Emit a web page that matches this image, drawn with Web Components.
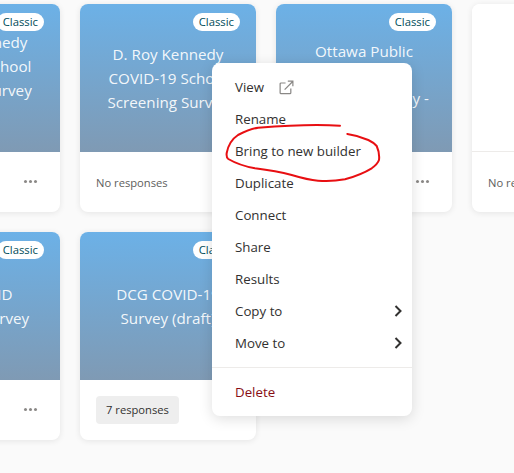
<!DOCTYPE html>
<html><head><meta charset="utf-8">
<style>
html,body{margin:0;height:473px;overflow:hidden;background:#fafafa;font-family:"Open Sans","Noto Sans",sans-serif;}
</style></head><body>
<survey-page>
  <survey-card title-text="D. Roy Kennedy|COVID-19 School|COVID-19 Survey" shift="24" classic dots></survey-card>
  <survey-card title-text="D. Roy Kennedy|COVID-19 School|Screening Survey" classic status="No responses"></survey-card>
  <survey-card title-text="Ottawa Public|Health|Screening Survey -" shift="7" classic dots></survey-card>
  <survey-card blank status="No responses"></survey-card>
  <survey-card title-text="DCG COVID|Screener Survey" classic dots></survey-card>
  <survey-card title-text="DCG COVID-19|Survey (draft)" classic badge="7 responses"></survey-card>
  <survey-menu slot="menu">
    <menu-entry>View<svg slot="after" width="15" height="15" viewBox="0 0 16 16" fill="none" stroke="#8a8886" stroke-width="1.3"><path d="M7 3.2H2.2a1 1 0 0 0-1 1v9.4a1 1 0 0 0 1 1h9.4a1 1 0 0 0 1-1V9"/><path d="M6 10.2 14.6 1.6M9.4 1.2h5.4v5.4"/></svg></menu-entry>
    <menu-entry>Rename</menu-entry>
    <menu-entry>Bring to new builder</menu-entry>
    <menu-entry>Duplicate</menu-entry>
    <menu-entry>Connect</menu-entry>
    <menu-entry>Share</menu-entry>
    <menu-entry>Results</menu-entry>
    <menu-entry sub>Copy to</menu-entry>
    <menu-entry sub>Move to</menu-entry>
    <menu-rule></menu-rule>
    <menu-entry danger>Delete</menu-entry>
  </survey-menu>
  <svg slot="menu" style="position:absolute;left:0;top:0;pointer-events:none" width="514" height="473" fill="none"><path d="M340 125.7C312 123.5 285 125.5 258 127.7C250 129 245 131.5 238 135C232 139 228 146 226.7 153C226.3 156 226.8 158 228.3 159C236 163.5 245 166.5 255 168.3C268 170 280 172 291.7 175C300 177.5 309 180 318 180.7C327 181.5 336 181 345 179.3C355 176.5 364 173 371.7 168.3C375.5 165.5 378 163 379 160C379.6 155 378.5 150 376.7 146C374.5 143.5 371.5 141.5 368.3 140C361.5 137 354.5 135 347.3 134" stroke="#e80f12" stroke-width="2" stroke-linecap="round"/></svg>
</survey-page>
<script>
customElements.define('survey-page',class extends HTMLElement{
  constructor(){super();this.attachShadow({mode:'open'}).innerHTML=`<style>
  :host{display:block;position:relative;width:514px;height:473px;overflow:hidden}
  .grid{display:grid;grid-template-columns:repeat(4,176px);grid-auto-rows:208px;gap:20px;margin-left:-116px;padding-top:4px;width:max-content}
  </style><div class="grid"><slot></slot></div><slot name="menu"></slot>`;}
});
customElements.define('survey-card',class extends HTMLElement{
  connectedCallback(){
    const a=n=>this.getAttribute(n);
    const lines=(a('title-text')||'').split('|').map(l=>`<div>${l}</div>`).join('');
    const blank=this.hasAttribute('blank');
    const st=a('status')||'';
    this.attachShadow({mode:'open'}).innerHTML=`<style>
    :host{display:flex;flex-direction:column;background:#fff;border-radius:8px;overflow:hidden;box-shadow:0 1px 6px rgba(0,0,0,.09)}
    .top{height:148px;flex:none;box-sizing:border-box;position:relative;display:flex;align-items:center;justify-content:center;background:linear-gradient(#6cb1e7,#7f9ab4);color:rgba(255,255,255,.93);font-size:15.2px;line-height:23.7px;text-align:center;padding:2px 0 ${a('shift')||0}px}
    .top.blank{background:#fff;border-bottom:1px solid #edebe9}
    .pill{position:absolute;top:9px;right:16px;height:18px;line-height:18px;padding:0 6px;border-radius:9px;background:#fff;color:#004c5a;font-size:11.3px}
    .bot{flex:1;display:flex;align-items:center;justify-content:space-between;padding:0 16px;color:#605e5c;position:relative}
    .badge{height:28px;line-height:28px;padding:0 10px;background:#eeeeee;color:#323130;border-radius:4px;font-size:11.2px}
    .dots{position:absolute;right:23px;top:28px;display:flex;gap:2px}
    .dots i{width:3px;height:3px;border-radius:50%;background:#8a8886}
    .st{font-size:11.2px}
    </style>
    <div class="top ${blank?'blank':''}">${this.hasAttribute('classic')?'<span class="pill">Classic</span>':''}<div>${lines}</div></div>
    <div class="bot">${a('badge')?`<span class="badge">${a('badge')}</span>`:''}${st?`<span class="st">${st}</span>`:''}${this.hasAttribute('dots')?'<span class="dots" aria-hidden="true"><i></i><i></i><i></i></span>':''}</div>`;
  }
});
customElements.define('survey-menu',class extends HTMLElement{
  constructor(){super();this.attachShadow({mode:'open'}).innerHTML=`<style>
  :host{display:block;position:absolute;left:212px;top:63px;width:200px;box-sizing:border-box;padding:8px 0;background:#fff;border-radius:8px;box-shadow:0 3px 14px rgba(0,0,0,.13)}
  </style><slot></slot>`;}
});
customElements.define('menu-entry',class extends HTMLElement{
  constructor(){super();this.attachShadow({mode:'open'}).innerHTML=`<style>
  :host{display:flex;align-items:center;height:32px;padding:0 10px 0 23px;font-size:13.3px;color:#323130;position:relative}
  :host([danger]){color:#880e14}
  ::slotted(svg){margin-left:15px}
  .c{margin-left:auto;display:none}
  :host([sub]) .c{display:block}
  </style><slot></slot><slot name="after"></slot><svg class="c" width="8" height="12" viewBox="0 0 8 12" fill="none" stroke="#323130" stroke-width="2"><path d="M1.5 1 6.5 6l-5 5"/></svg>`;}
});
customElements.define('menu-rule',class extends HTMLElement{
  constructor(){super();this.attachShadow({mode:'open'}).innerHTML=`<style>
  :host{display:block;height:1px;background:#edebe9;margin:8px 0}
  </style>`;}
});
</script>
</body></html>
